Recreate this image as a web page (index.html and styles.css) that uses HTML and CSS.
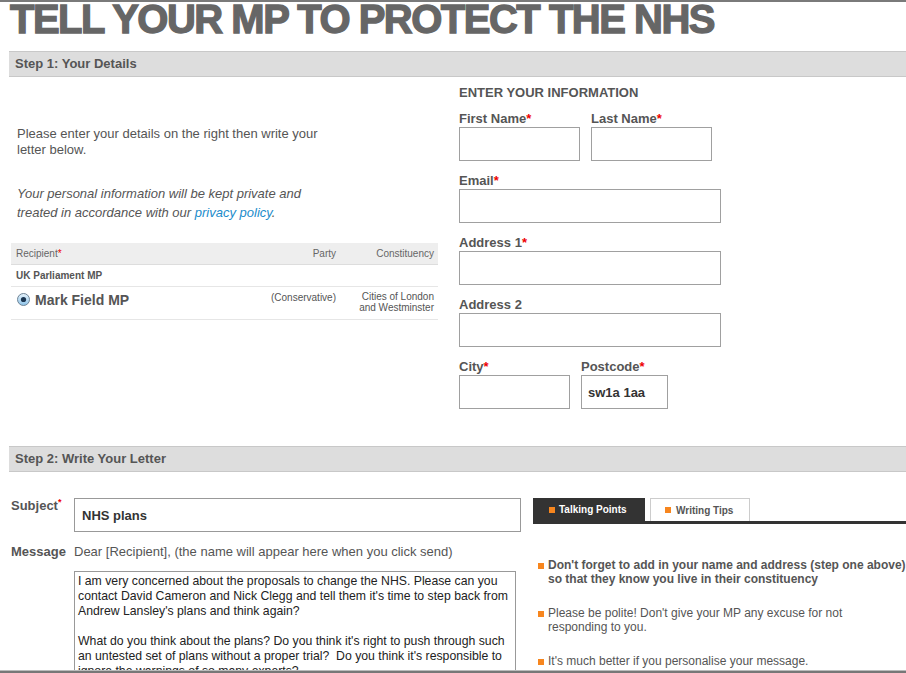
FILE: index.html
```html
<!DOCTYPE html>
<html lang="en">
<head>
  <meta charset="UTF-8">
  <meta name="viewport" content="width=device-width, initial-scale=1.0">
  <title>Tell your MP to protect the NHS</title>
  <link rel="stylesheet" href="styles.css">
</head>
<body>
  <div class="page">
    <h1 class="title">TELL YOUR MP TO PROTECT THE NHS</h1>

    <h2 class="step">Step 1: Your Details</h2>
    <div class="details">
      <div class="intro">
        <p class="lead">Please enter your details on the right then write your letter below.</p>
        <p class="privacy">Your personal information will be kept private and treated in accordance with our <a href="#">privacy policy</a>.</p>

        <table class="recipients">
          <thead>
            <tr><th class="who">Recipient<span class="req">*</span></th><th class="party">Party</th><th class="seat">Constituency</th></tr>
          </thead>
          <tbody>
            <tr class="group"><td colspan="3">UK Parliament MP</td></tr>
            <tr class="mp">
              <td class="who">
                <div class="pick">
                  <svg width="13" height="13" viewBox="0 0 13 13">
                    <defs>
                      <linearGradient id="rb" x1="0" y1="0" x2="0" y2="1">
                        <stop offset="0" stop-color="#e8f4fc"/>
                        <stop offset="1" stop-color="#8cc2e8"/>
                      </linearGradient>
                    </defs>
                    <circle cx="6.5" cy="6.5" r="6" fill="url(#rb)" stroke="#6f8496"/>
                    <circle cx="6.5" cy="6.5" r="2.6" fill="#1b3550"/>
                  </svg>
                  <span>Mark Field MP</span>
                </div>
              </td>
              <td class="party">(Conservative)</td>
              <td class="seat">Cities of London<br>and Westminster</td>
            </tr>
          </tbody>
        </table>
      </div>

      <form class="info">
        <h3>ENTER YOUR INFORMATION</h3>
        <div class="row">
          <label class="field">First Name<span class="req">*</span><input class="w-half" type="text"></label>
          <label class="field">Last Name<span class="req">*</span><input class="w-half" type="text"></label>
        </div>
        <label class="field">Email<span class="req">*</span><input class="w-full" type="text"></label>
        <label class="field">Address 1<span class="req">*</span><input class="w-full" type="text"></label>
        <label class="field">Address 2<input class="w-full" type="text"></label>
        <div class="row">
          <label class="field">City<span class="req">*</span><input class="w-city" type="text"></label>
          <label class="field">Postcode<span class="req">*</span><input class="w-post" type="text" value="sw1a 1aa"></label>
        </div>
      </form>
    </div>

    <h2 class="step">Step 2: Write Your Letter</h2>
    <div class="letter">
      <div class="compose">
        <div class="line">
          <label class="name">Subject<sup class="req">*</sup></label>
          <input class="subject" type="text" value="NHS plans">
        </div>
        <div class="line message">
          <label class="name">Message</label>
          <span>Dear [Recipient], (the name will appear here when you click send)</span>
        </div>
        <textarea class="body">I am very concerned about the proposals to change the NHS. Please can you
contact David Cameron and Nick Clegg and tell them it's time to step back from
Andrew Lansley's plans and think again?

What do you think about the plans? Do you think it's right to push through such
an untested set of plans without a proper trial?  Do you think it's responsible to
ignore the warnings of so many experts?</textarea>
      </div>

      <div class="tips">
        <div class="tabs">
          <span class="tab active">Talking Points</span>
          <span class="tab">Writing Tips</span>
        </div>
        <ul class="points">
          <li class="strong"><span>Don't forget to add in your name and address (step one above)<br>so that they know you live in their constituency</span></li>
          <li><span>Please be polite! Don't give your MP any excuse for not<br>responding to you.</span></li>
          <li><span>It's much better if you personalise your message.</span></li>
        </ul>
      </div>
    </div>
  </div>
  <div class="edge"></div>
</body>
</html>
```

FILE: styles.css
```css
* { box-sizing: border-box; }
body { margin: 0; border-top: 2px solid #7a7a7a; font-family: "Liberation Sans", Arial, sans-serif; color: #555; overflow: hidden; }
.page { width: 960px; margin-left: 9px; }

.title { margin: 0 0 15px 1px; font-size: 40px; line-height: 34px; letter-spacing: -1.5px; color: #666; -webkit-text-stroke: 1.3px #666; }

.step { margin: 0; height: 26px; padding-left: 6px; font-size: 13px; line-height: 24px; color: #555; background: #ddd; border-top: 1px solid #c8c8c8; border-bottom: 1px solid #c8c8c8; }

.details { display: grid; grid-template-columns: 429px 262px; column-gap: 21px; margin-bottom: 25px; }
.lead, .privacy { width: 320px; margin: 0 0 0 8px; font-size: 13px; }
.lead { margin-top: 49px; line-height: 16px; }
.privacy { margin-top: 26px; line-height: 19px; font-style: italic; }
.privacy a { color: #1b8ccb; text-decoration: none; }

.req { color: #e00; }

.recipients { width: 427px; margin: 21px 0 0 2px; border-collapse: collapse; font-size: 10px; }
.recipients th { height: 21px; padding: 0 2px 0 5px; font-weight: normal; color: #666; text-align: right; background: #eee; border-bottom: 1px solid #ddd; }
.recipients th.who { text-align: left; }
.recipients th.seat { padding-right: 4px; }
.recipients .party { width: 100px; }
.recipients .seat { width: 100px; }
.recipients .group td { height: 22px; padding: 0 5px; font-weight: bold; border-bottom: 1px solid #e6e6e6; }
.recipients .mp td { padding: 4px 2px 6px 5px; vertical-align: top; text-align: right; line-height: 11px; border-bottom: 1px solid #e6e6e6; }
.recipients .mp td.seat { padding-right: 4px; }
.recipients .mp td.party { padding-top: 5px; }
.recipients .mp td.who { padding: 5px 0 0 6px; text-align: left; }
.pick { display: flex; align-items: center; gap: 5px; font-size: 14px; line-height: 16px; font-weight: bold; }
.pick svg { flex: none; }

.info h3 { margin: 8px 0 10px; font-size: 13px; line-height: 16px; }
.info .row { display: flex; gap: 11px; }
.field { display: block; margin-bottom: 12px; font-size: 13px; line-height: 16px; font-weight: bold; }
.field input { display: block; height: 34px; padding: 0 6px; border: 1px solid #a0a0a0; font: bold 13px "Liberation Sans", Arial, sans-serif; color: #333; }
.w-half { width: 121px; }
.w-full { width: 262px; }
.w-city { width: 111px; }
.w-post { width: 87px; }

.letter { display: grid; grid-template-columns: 512px 1fr; column-gap: 12px; margin-top: 26px; }
.line { display: flex; font-size: 13px; line-height: 16px; }
.line .name { width: 65px; flex: none; padding-left: 2px; font-weight: bold; }
.line sup { font-size: 9px; line-height: 0; }
.subject { width: 447px; height: 34px; padding: 0 7px; border: 1px solid #999; font: bold 13px "Liberation Sans", Arial, sans-serif; color: #333; }
.message { margin-top: 12px; }
.body { display: block; width: 442px; height: 130px; margin: 11px 0 0 65px; padding: 2px 3px; border: 1px solid #999; font: 12.25px/15px "Liberation Sans", Arial, sans-serif; color: #222; white-space: pre; overflow: hidden; resize: none; }

.tabs { display: flex; gap: 5px; border-bottom: 3px solid #333; }
.tab { display: flex; align-items: center; height: 23px; width: 100px; padding-left: 14px; font-size: 10px; font-weight: bold; color: #555; background: #fff; border: 1px solid #ccc; border-bottom: none; }
.tab.active { width: 112px; padding-left: 16px; color: #fff; background: #333; border: none; }
.tab::before { content: ""; width: 6px; height: 6px; margin-right: 5px; background: #f7861e; }
.tab.active::before { margin-right: 4px; }

.points { margin: 34px 0 0; padding: 0 0 0 5px; list-style: none; font-size: 12px; line-height: 14px; white-space: nowrap; }
.points li { display: flex; margin-bottom: 20px; }
.points li::before { content: ""; flex: none; width: 6px; height: 6px; margin: 5px 4px 0 0; background: #f7861e; }
.points li.strong { font-weight: bold; }

.edge { position: fixed; left: 0; right: 0; bottom: 0; height: 3px; background: #777; border-top: 1px solid #bbb; }
```
